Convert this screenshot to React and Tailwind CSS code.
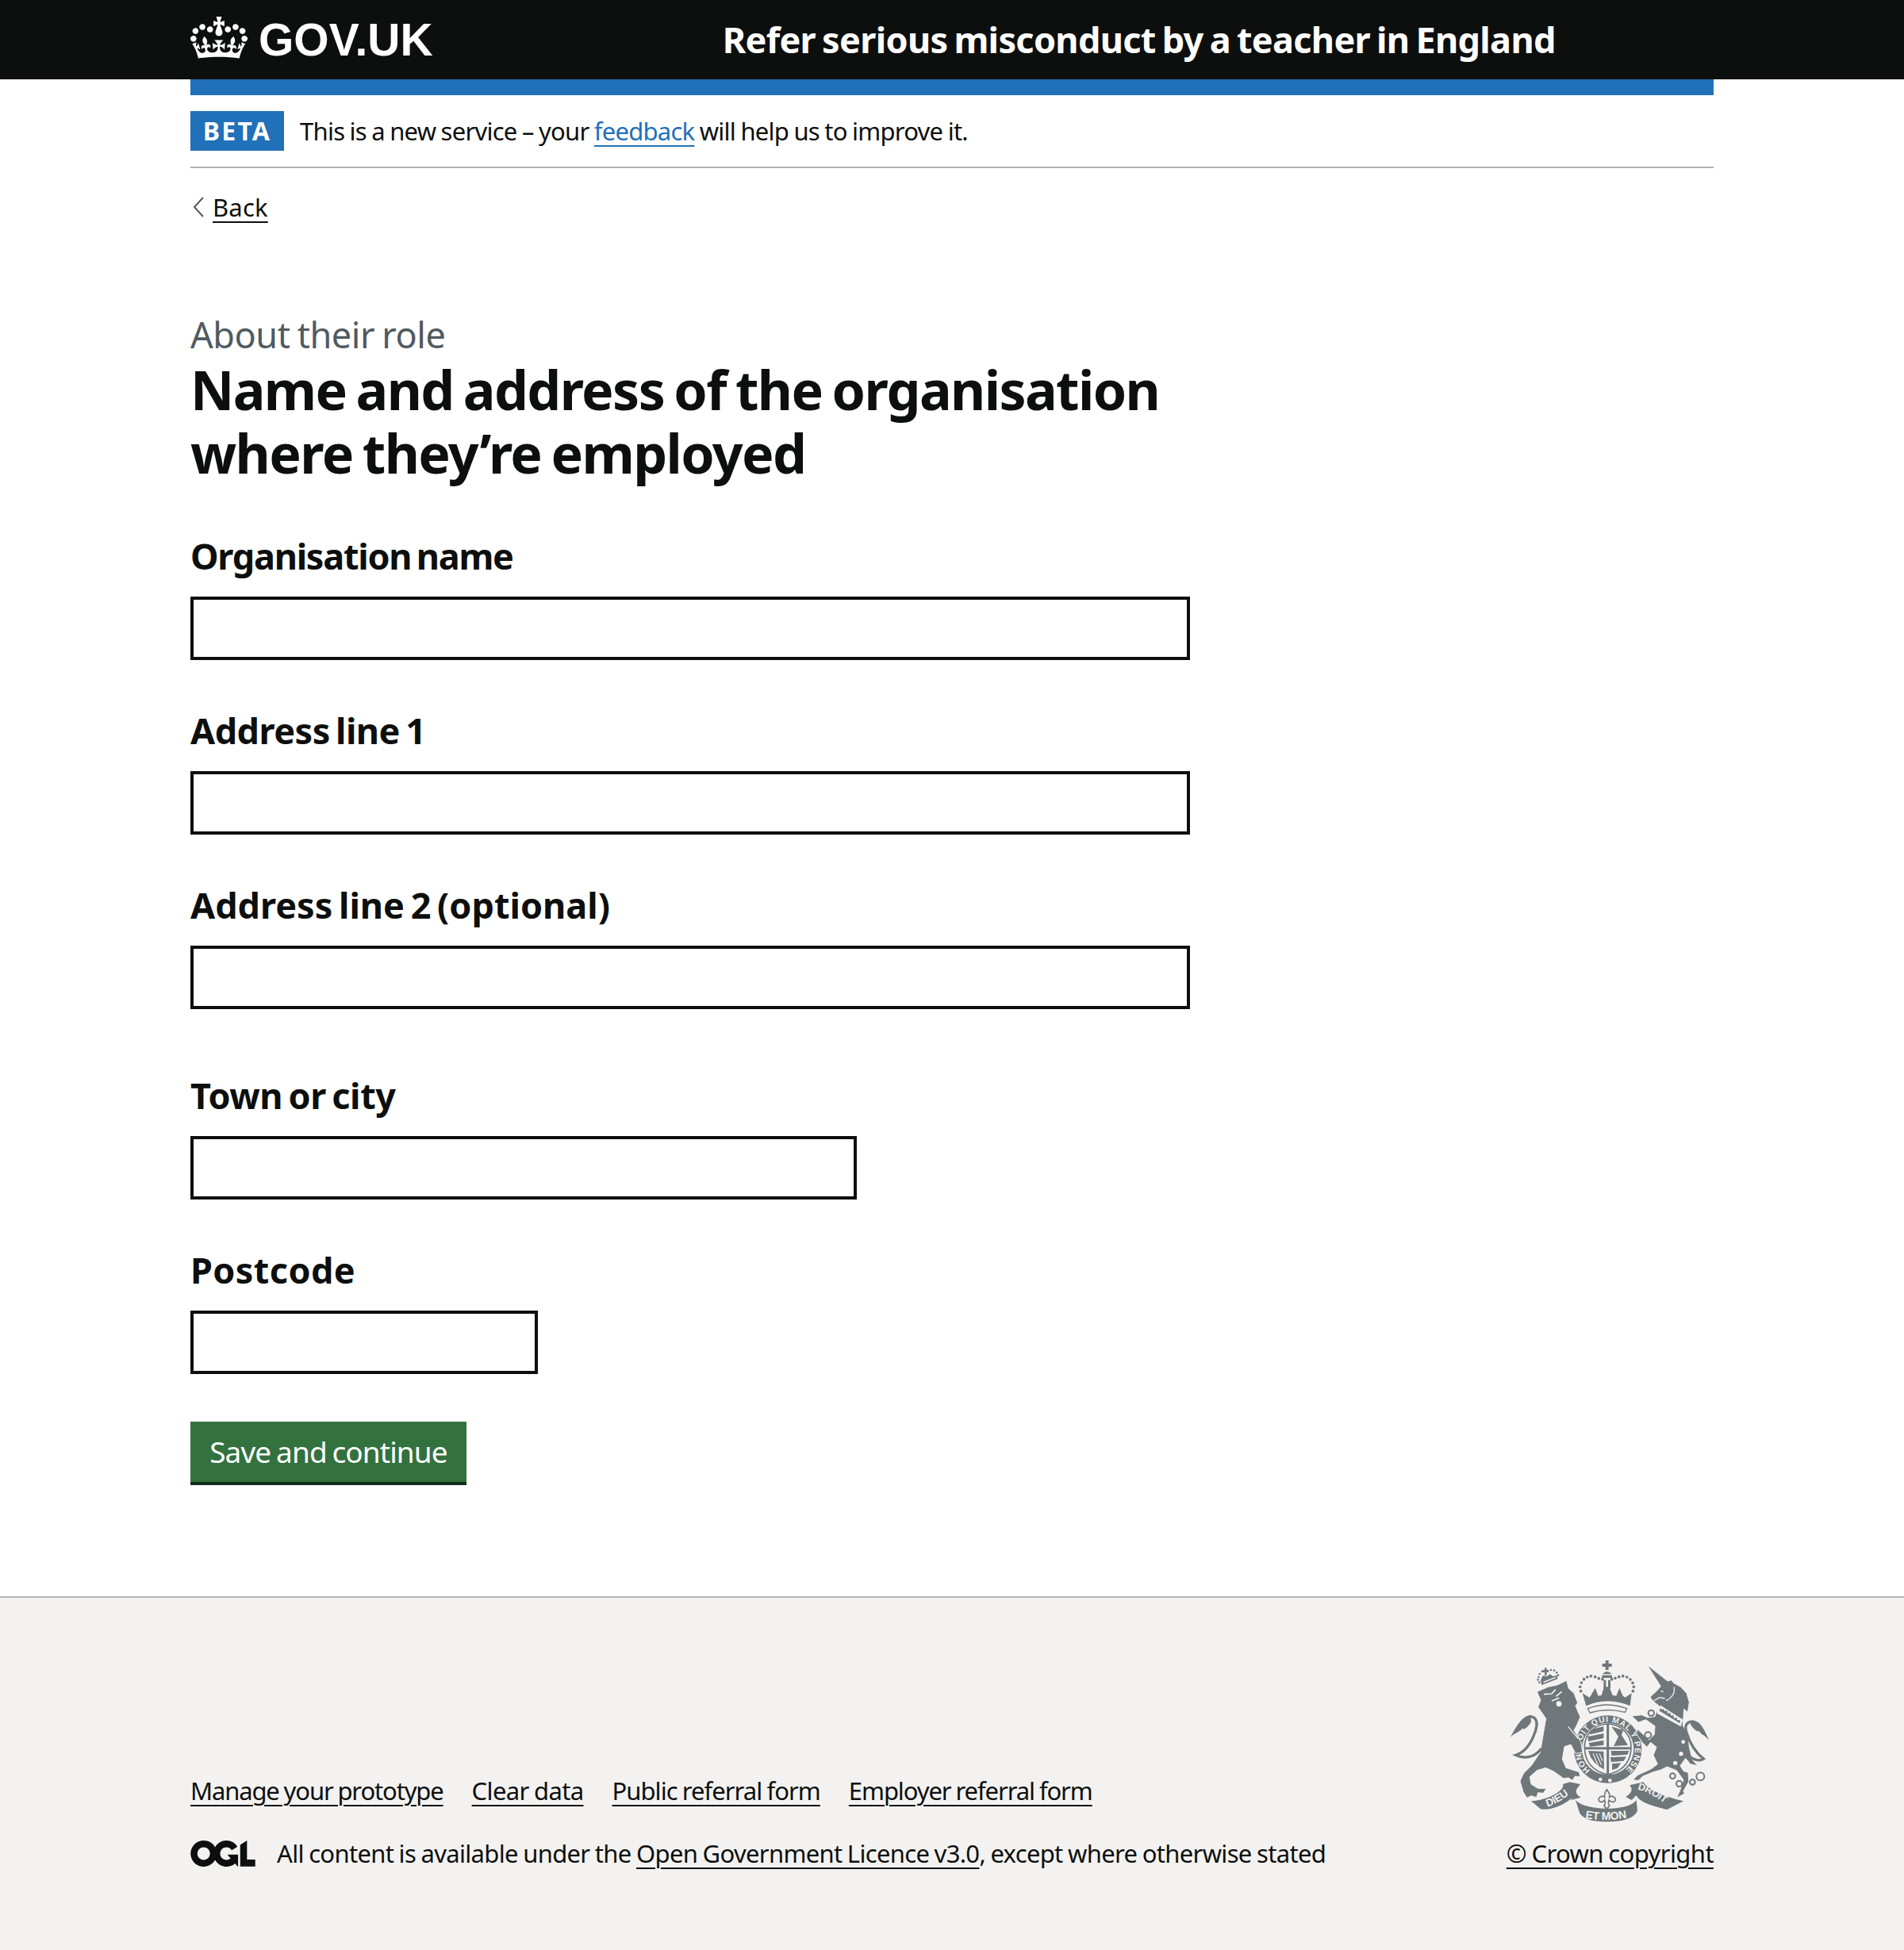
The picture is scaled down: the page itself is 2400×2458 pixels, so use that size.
const F = { fontFamily: '"Noto Sans", sans-serif' };
const Crown = () => (
  <svg viewBox="0 0 132 97" className="w-[72px] h-[53px] mb-[6px] fill-white"><path fillRule="evenodd" d="M25 30.2c3.5 1.5 7.7-.2 9.1-3.7 1.5-3.6-.2-7.8-3.9-9.2-3.6-1.4-7.6.3-9.1 3.9-1.4 3.5.3 7.5 3.9 9zM9 39.5c3.6 1.5 7.8-.2 9.2-3.7 1.5-3.6-.2-7.8-3.9-9.1-3.6-1.5-7.6.2-9.1 3.8-1.4 3.5.3 7.5 3.8 9zM4.4 57.2c3.5 1.5 7.7-.2 9.1-3.8 1.5-3.6-.2-7.7-3.9-9.1-3.5-1.5-7.6.3-9.1 3.8-1.4 3.5.3 7.6 3.9 9.1zm38.3-21.4c3.5 1.5 7.7-.2 9.1-3.8 1.5-3.6-.2-7.7-3.9-9.1-3.6-1.5-7.6.3-9.1 3.8-1.3 3.6.4 7.7 3.9 9.1zm64.4-5.6c-3.6 1.5-7.8-.2-9.1-3.7-1.5-3.6.2-7.8 3.8-9.2 3.6-1.4 7.7.3 9.2 3.9 1.3 3.5-.4 7.5-3.9 9zm15.9 9.3c-3.6 1.5-7.7-.2-9.1-3.7-1.5-3.6.2-7.8 3.7-9.1 3.6-1.5 7.7.2 9.2 3.8 1.5 3.5-.3 7.5-3.8 9zm4.7 17.7c-3.6 1.5-7.8-.2-9.2-3.8-1.5-3.6.2-7.7 3.9-9.1 3.6-1.5 7.7.3 9.2 3.8 1.3 3.5-.4 7.6-3.9 9.1zM89.3 35.8c-3.6 1.5-7.8-.2-9.2-3.8-1.4-3.6.2-7.7 3.9-9.1 3.6-1.5 7.7.3 9.2 3.8 1.4 3.6-.3 7.7-3.9 9.1zM69.7 17.7l8.9 4.7V9.3l-8.9 2.8c-.2-.3-.5-.6-.9-.9L72.4 0H59.6l3.5 11.2c-.3.3-.6.5-.9.9l-8.8-2.8v13.1l8.8-4.7c.3.3.6.7.9.9l-5 15.4v.1c-.2.8-.4 1.6-.4 2.4 0 4.1 3.1 7.5 7 8.1h.2c.3 0 .7.1 1 .1.4 0 .7 0 1-.1h.2c4-.6 7.1-4.1 7.1-8.1 0-.8-.1-1.7-.4-2.4V34l-5.1-15.4c.4-.2.7-.6 1-.9zM66 92.8c16.9 0 32.8 1.1 47.1 3.2 4-16.9 8.9-26.7 14-33.5l-9.6-3.4c1 4.9 1.1 7.2 0 10.2-1.5-1.4-3-4.3-4.2-8.7L108.6 76c2.8-2 5-3.2 7.5-3.3-4.4 9.4-10 11.9-13.6 11.2-4.3-.8-6.3-4.6-5.6-7.9 1-4.7 5.7-5.9 8-.5 4.3-8.7-3-11.4-7.6-8.8 7.1-7.2 7.9-13.5 2.1-21.1-8 6.1-8.1 12.3-4.5 20.8-4.7-5.4-12.1-2.5-9.5 6.2 3.4-5.2 7.9-2 7.2 3.1-.6 4.3-6.4 7.8-13.5 7.2-10.3-.9-10.9-8-11.2-13.8 2.5-.5 7.1 1.8 11 7.3L80.2 60c-4.1 4.4-8 5.3-12.3 5.4 1.4-4.4 8-11.6 8-11.6H55.5s6.4 7.2 7.9 11.6c-4.2-.1-8-1-12.3-5.4l1.4 16.4c3.9-5.5 8.5-7.7 10.9-7.3-.3 5.8-.9 12.8-11.1 13.8-7.2.6-12.9-2.9-13.5-7.2-.7-5 3.8-8.3 7.1-3.1 2.7-8.7-4.6-11.6-9.4-6.2 3.7-8.5 3.6-14.7-4.6-20.8-5.8 7.6-5 13.9 2.2 21.1-4.7-2.6-11.9.1-7.7 8.8 2.3-5.5 7.1-4.2 8.1.5.7 3.3-1.3 7.1-5.7 7.9-3.5.7-9-1.8-13.5-11.2 2.5.1 4.7 1.3 7.5 3.3l-4.7-15.4c-1.2 4.4-2.7 7.2-4.3 8.7-1.1-3-.9-5.3 0-10.2l-9.5 3.4c5 6.9 9.9 16.7 14 33.5 14.8-2.1 30.8-3.2 47.7-3.2z" /></svg>
);
const Ogl = () => (
  <svg viewBox="0 0 483.2 195.7" className="w-[82px] h-[33px] fill-[#0d0f0e] shrink-0"><path d="M421.5 142.8V.1l-50.7 32.3v161.1h112.4v-50.7zm-122.3-9.6A47.12 47.12 0 0 1 221 97.8c0-26 21.1-47.1 47.1-47.1 16.7 0 31.4 8.7 39.7 21.8l42.7-27.2A97.63 97.63 0 0 0 268.1 0c-36.5 0-68.3 20.1-85.1 49.7A98 98 0 0 0 97.8 0C43.9 0 0 43.9 0 97.8s43.9 97.8 97.8 97.8c36.5 0 68.3-20.1 85.1-49.7a97.76 97.76 0 0 0 149.6 25.4l19.4 22.2h3v-87.8h-80l24.3 27.5zM97.8 145c-26 0-47.1-21.1-47.1-47.1s21.1-47.1 47.1-47.1 47.2 21 47.2 47S123.8 145 97.8 145" /></svg>
);
const G = '#6f777b';
const BG = '#f3f2f1';
const LS = '"Liberation Sans", sans-serif';
const dots = (pts, r = 7) => pts.map(([x, y], i) => <circle key={i} cx={x} cy={y} r={r} fill={G} />);
const rings = (pts) => pts.map(([x, y, r], i) => <circle key={i} cx={x} cy={y} r={r} fill={BG} stroke={G} strokeWidth="6" />);
const SHIELD = 'M352,398 C352,350 390,314 440,312 C490,314 528,350 528,398 C528,460 490,492 440,504 C390,492 352,460 352,398 Z';
const Arms = () => (
  <svg viewBox="72 72 750 612" className="w-[250px] h-[204px] block">
    <defs>
      <path id="garter" d="M374,487 A103,103 0 1 1 491.5,497" />
      <path id="scrollL" d="M212,626 Q268,606 314,560" />
      <path id="scrollM" d="M354,668 Q435,684 528,664" />
      <path id="scrollR" d="M552,560 Q612,575 672,628" />
      <clipPath id="shieldClip"><path d={SHIELD} /></clipPath>
    </defs>
    {/* royal crown */}
    <path fill={G} d="M431,72 h12 v12 h12 v12 h-12 v12 h-12 v-12 h-12 v-12 h12 z" />
    <path fill={G} d="M420,124 Q437,104 454,124 Z" />
    <path fill={G} d="M418,128 h38 v10 h-38 z" />
    <path fill={G} d="M424,146 h9 v32 h-9 z M441,146 h9 v32 h-9 z" />
    {dots([[338,188],[335,172],[340,156],[350,143],[362,135],[376,131],[392,134],[406,140],[420,143],[455,143],[468,139],[482,134],[497,131],[512,135],[525,144],[534,157],[538,172],[535,188]], 5.5)}
    <path fill={G} d="M344,196 L370,212 L376,205 L392,176 L404,206 L416,204 L426,172 L446,172 L458,204 L472,206 L484,176 L496,205 L506,212 L530,196 L524,244 Q437,208 358,244 Z" />
    <path fill={BG} d="M364,254 Q437,226 512,254 L505,268 Q437,250 372,270 Z" stroke={G} strokeWidth="4" />
    {/* garter */}
    <circle cx="440" cy="408" r="128" fill={G} />
    <circle cx="440" cy="407" r="98" fill={BG} />
    <path fill={BG} stroke={G} strokeWidth="5" d={SHIELD} />
    <g clipPath="url(#shieldClip)">
      <path fill="none" stroke={G} strokeWidth="9" d="M440,300 V510 M345,404 H535" />
      <path fill={G} d="M454,322 L498,336 L492,354 L516,392 L462,396 L480,360 Z" />
      <path fill={G} d="M372,334 L424,322 L424,340 L372,352 Z M364,360 L424,348 L424,366 L366,378 Z M368,384 L424,374 L424,392 L372,398 Z M452,414 L520,414 L514,428 L454,432 Z M450,438 L510,436 L500,452 L452,456 Z M456,462 L490,460 L476,480 L456,486 Z" />
      <path fill={G} d="M366,414 L424,416 L426,484 Q380,464 366,414 Z" />
      <path fill="none" stroke={BG} strokeWidth="3.5" d="M384,424 L404,470 M396,424 L416,468 M408,424 L420,452" />
    </g>
    <text fontFamily={LS} fontWeight="700" fontSize="31" fill={BG}>
      <textPath href="#garter" textLength="500">HONI SOIT QUI MAL Y PENSE</textPath>
    </text>
    <circle cx="412" cy="522" r="7" fill={BG} /><circle cx="448" cy="526" r="7" fill={BG} />
    {/* lion */}
    <path fill={G} stroke={BG} strokeWidth="3" d="M172,190 L215,172 L248,165 L284,148 L292,178 L312,196 L326,232 L318,244 L336,286 L322,318 L312,336 L338,380 L345,420 L318,424 L300,390 L276,398 L268,445 L282,478 L332,494 L335,512 L316,510 L306,526 L292,516 L272,518 L236,492 L205,478 L172,488 L145,512 L150,540 L176,556 L208,556 L196,574 L176,572 L170,590 L150,584 L134,592 L120,570 L108,528 L122,498 L152,468 L184,420 L196,350 L206,292 L176,248 L186,222 Z" />
    <path fill="none" stroke={G} strokeWidth="10" strokeLinecap="round" d="M186,408 C160,442 120,444 92,430 C125,420 150,388 166,340 C176,308 172,286 146,284" />
    <path fill={G} d="M148,278 C118,282 98,312 72,362 C92,344 106,344 118,328 C120,340 140,322 150,304 Z" />
    <path fill="none" stroke={BG} strokeWidth="5" d="M198,200 L228,198 L242,182 M244,208 L266,190 M228,225 L256,214" />
    <circle cx="255" cy="236" r="10" fill={BG} />
    <path fill="none" stroke={BG} strokeWidth="4" d="M290,322 L328,368" />
    {/* lion crown */}
    <path fill={G} d="M190,165 L250,142 L248,128 L232,132 L222,124 L210,132 L194,130 L186,146 Z" />
    <path fill={BG} d="M196,152 L242,134 L244,138 L198,157 Z" />
    {dots([[178,135],[176,145],[182,123],[192,114],[225,108],[237,110],[247,118],[252,128],[181,155]], 4)}
    <path fill={G} d="M201,100 h8 v8 h8 v8 h-8 v12 h-8 v-12 h-8 v-8 h8 z" />
    {/* unicorn */}
    <path fill={G} stroke={BG} strokeWidth="3" d="M588,88 L666,150 L680,146 L690,158 L716,172 L738,196 L748,230 L742,268 L728,256 L724,318 L744,356 L748,400 L760,448 L780,470 L752,464 L734,442 L714,470 L726,490 L744,496 L746,530 L726,566 L730,576 L700,592 L712,566 L726,524 L700,488 L664,474 L640,486 L612,494 L572,510 L556,526 L534,524 L552,506 L604,482 L628,464 L612,430 L624,400 L602,382 L588,400 L570,382 L548,350 L552,332 L596,372 L616,352 L618,320 L584,296 L556,306 L530,282 L568,278 L592,288 L618,284 L632,242 L610,226 L600,210 L624,188 L640,170 Z" />
    <path fill="none" stroke={G} strokeWidth="10" strokeLinecap="round" d="M744,432 C770,452 790,452 802,444 C770,420 752,390 738,346 C728,316 740,302 762,304" />
    <path fill={G} d="M758,298 C790,300 804,332 822,372 C804,352 792,352 784,338 C780,346 760,328 752,312 Z" />
    <path fill={BG} d="M626,250 L640,242 L724,296 L716,322 L626,272 Z" />
    <path fill={G} d="M634,262 L640,252 L644,258 L652,256 L654,264 L664,262 L666,272 L676,270 L678,280 L688,280 L690,290 L702,288 L702,298 L714,298 L712,310 Z" />
    <path fill="none" stroke={BG} strokeWidth="4" d="M608,228 L636,212 L656,216 M640,188 L650,190 M690,172 C696,196 680,216 660,224" />
    <circle cx="717" cy="425" r="8" fill={BG} /><circle cx="695" cy="460" r="8" fill={BG} />
    {rings([[604,271,11],[592,355,12],[725,380,10],[685,509,10],[710,538,11],[760,532,10],[790,511,15]])}
    {/* scroll */}
    <path fill={G} d="M150,604 C220,600 280,560 270,540 L296,532 L336,540 C320,560 310,572 338,590 L300,600 L306,590 C270,625 210,640 186,634 Z" />
    <path fill={G} d="M522,544 L574,532 C590,560 660,590 726,604 L664,636 C610,622 560,610 548,582 L530,600 L508,588 C535,570 534,556 522,544 Z" />
    <path fill={G} d="M318,600 C340,625 400,632 436,632 C480,632 530,625 548,600 L552,640 C540,672 490,682 436,682 C390,682 350,675 334,650 Z" />
    <text fontFamily={LS} fontWeight="700" fontSize="40" fill={BG}><textPath href="#scrollL">DIEU</textPath></text>
    <text fontFamily={LS} fontWeight="700" fontSize="42" fill={BG}><textPath href="#scrollM">ET MON</textPath></text>
    <text fontFamily={LS} fontWeight="700" fontSize="38" fill={BG}><textPath href="#scrollR">DROIT</textPath></text>
    <path fill={BG} stroke={G} strokeWidth="5" d="M436,560 C428,572 424,582 430,592 C420,578 402,590 406,602 C412,612 424,606 428,600 L430,612 L426,622 L436,634 L446,622 L442,612 L444,600 C450,606 462,612 468,602 C472,590 454,578 444,592 C450,582 446,572 436,560 Z" />
  </svg>
);
const Field = ({ label, w, cls, t }) => (
  <div className={cls}>
    <label className={`block text-[45px] leading-[58px] font-bold mb-[22px] [word-spacing:-4px] ${t}`}>{label}</label>
    <div className={`${w} h-[80px] border-4 border-[#0d0f0e] bg-white`} />
  </div>
);
const L = ({ children, t }) => <a className={`underline decoration-2 underline-offset-[6px] ${t || ''}`}>{children}</a>;
export default function App() {
  return (
    <div style={F} className="min-h-[2458px] bg-white text-[#0d0f0e] flex flex-col">
      <header className="h-[100px] bg-[#0d0f0e] text-white">
        <div className="mx-auto w-[1920px] h-full flex items-center">
          <Crown />
          <span className="ml-[14px] pt-[2px] text-[57px] font-bold" style={{ fontFamily: LS }}>GOV.UK</span>
          <span className="ml-[365px] text-[45px] font-bold tracking-[-0.67px] [word-spacing:-3px]">Refer serious misconduct by a teacher in England</span>
        </div>
      </header>
      <main className="mx-auto w-[1920px] flex-1">
        <div className="h-[20px] bg-[#2170ba]" />
        <div className="h-[92px] border-b-2 border-[#b1b4b6] pt-[20px] flex items-start">
          <span className="bg-[#2170ba] text-white font-bold text-[32px] leading-[50px] h-[50px] w-[118px] text-center tracking-[2.2px]">BETA</span>
          <span className="ml-[20px] text-[31px] leading-[50px] tracking-[-0.75px] [word-spacing:-1px]">This is a new service – your <a className="text-[#2170ba] underline decoration-2 underline-offset-[6px]">feedback</a> will help us to improve it.</span>
        </div>
        <div className="mt-[29px] flex items-center text-[31px] leading-[40px] h-[40px] tracking-[0.2px]">
          <svg viewBox="0 0 14 26" className="w-[14px] h-[26px] ml-[3px] mr-[11px] fill-none stroke-[#505a5f] stroke-2"><path d="M13 1 L2 13 L13 25" /></svg>
          <L>Back</L>
        </div>
        <div className="mt-[111px] text-[45px] leading-[59px] text-[#505a5f] tracking-[-0.45px] [word-spacing:-2px]">About their role</div>
        <h1 className="text-[68px] leading-[80px] font-bold w-[1260px] tracking-[-1.6px] [word-spacing:-4px] mb-[61px]">Name and address of the organisation where they’re employed</h1>
        <Field label="Organisation name" t="tracking-[-1.25px]" w="w-[1260px]" cls="mb-[60px]" />
        <Field label="Address line 1" t="tracking-[-0.5px]" w="w-[1260px]" cls="mb-[60px]" />
        <Field label="Address line 2 (optional)" t="tracking-[0px]" w="w-[1260px]" cls="mb-[80px]" />
        <Field label="Town or city" t="tracking-[-0.4px]" w="w-[840px]" cls="mb-[60px]" />
        <Field label="Postcode" t="tracking-[0.4px]" w="w-[438px]" cls="mb-[60px]" />
        <button className="block w-[348px] h-[80px] bg-[#33713f] border-b-4 border-[#112d18] text-white text-[37px] tracking-[-0.9px] [word-spacing:-2px]">Save and continue</button>
      </main>
      <footer className="mt-[140px] h-[446px] bg-[#f3f2f1] border-t-2 border-[#b1b4b6]">
        <div className="mx-auto w-[1920px] h-full flex justify-between items-end pb-[100px] text-[31px] leading-[44px] tracking-[-0.68px] [word-spacing:-1px]">
          <div>
            <div className="flex gap-[36px] mb-[35px]">
              <L t="tracking-[-1.15px]">Manage your prototype</L>
              <L t="tracking-[-0.65px]">Clear data</L>
              <L t="tracking-[-0.95px]">Public referral form</L>
              <L t="tracking-[-1.1px]">Employer referral form</L>
            </div>
            <div className="flex items-center">
              <Ogl />
              <span className="ml-[27px]">All content is available under the <L>Open Government Licence v3.0</L>, except where otherwise stated</span>
            </div>
          </div>
          <div className="flex flex-col items-center">
            <Arms />
            <div className="mt-[17px]"><L t="tracking-[-0.6px]">© Crown copyright</L></div>
          </div>
        </div>
      </footer>
    </div>
  );
}
